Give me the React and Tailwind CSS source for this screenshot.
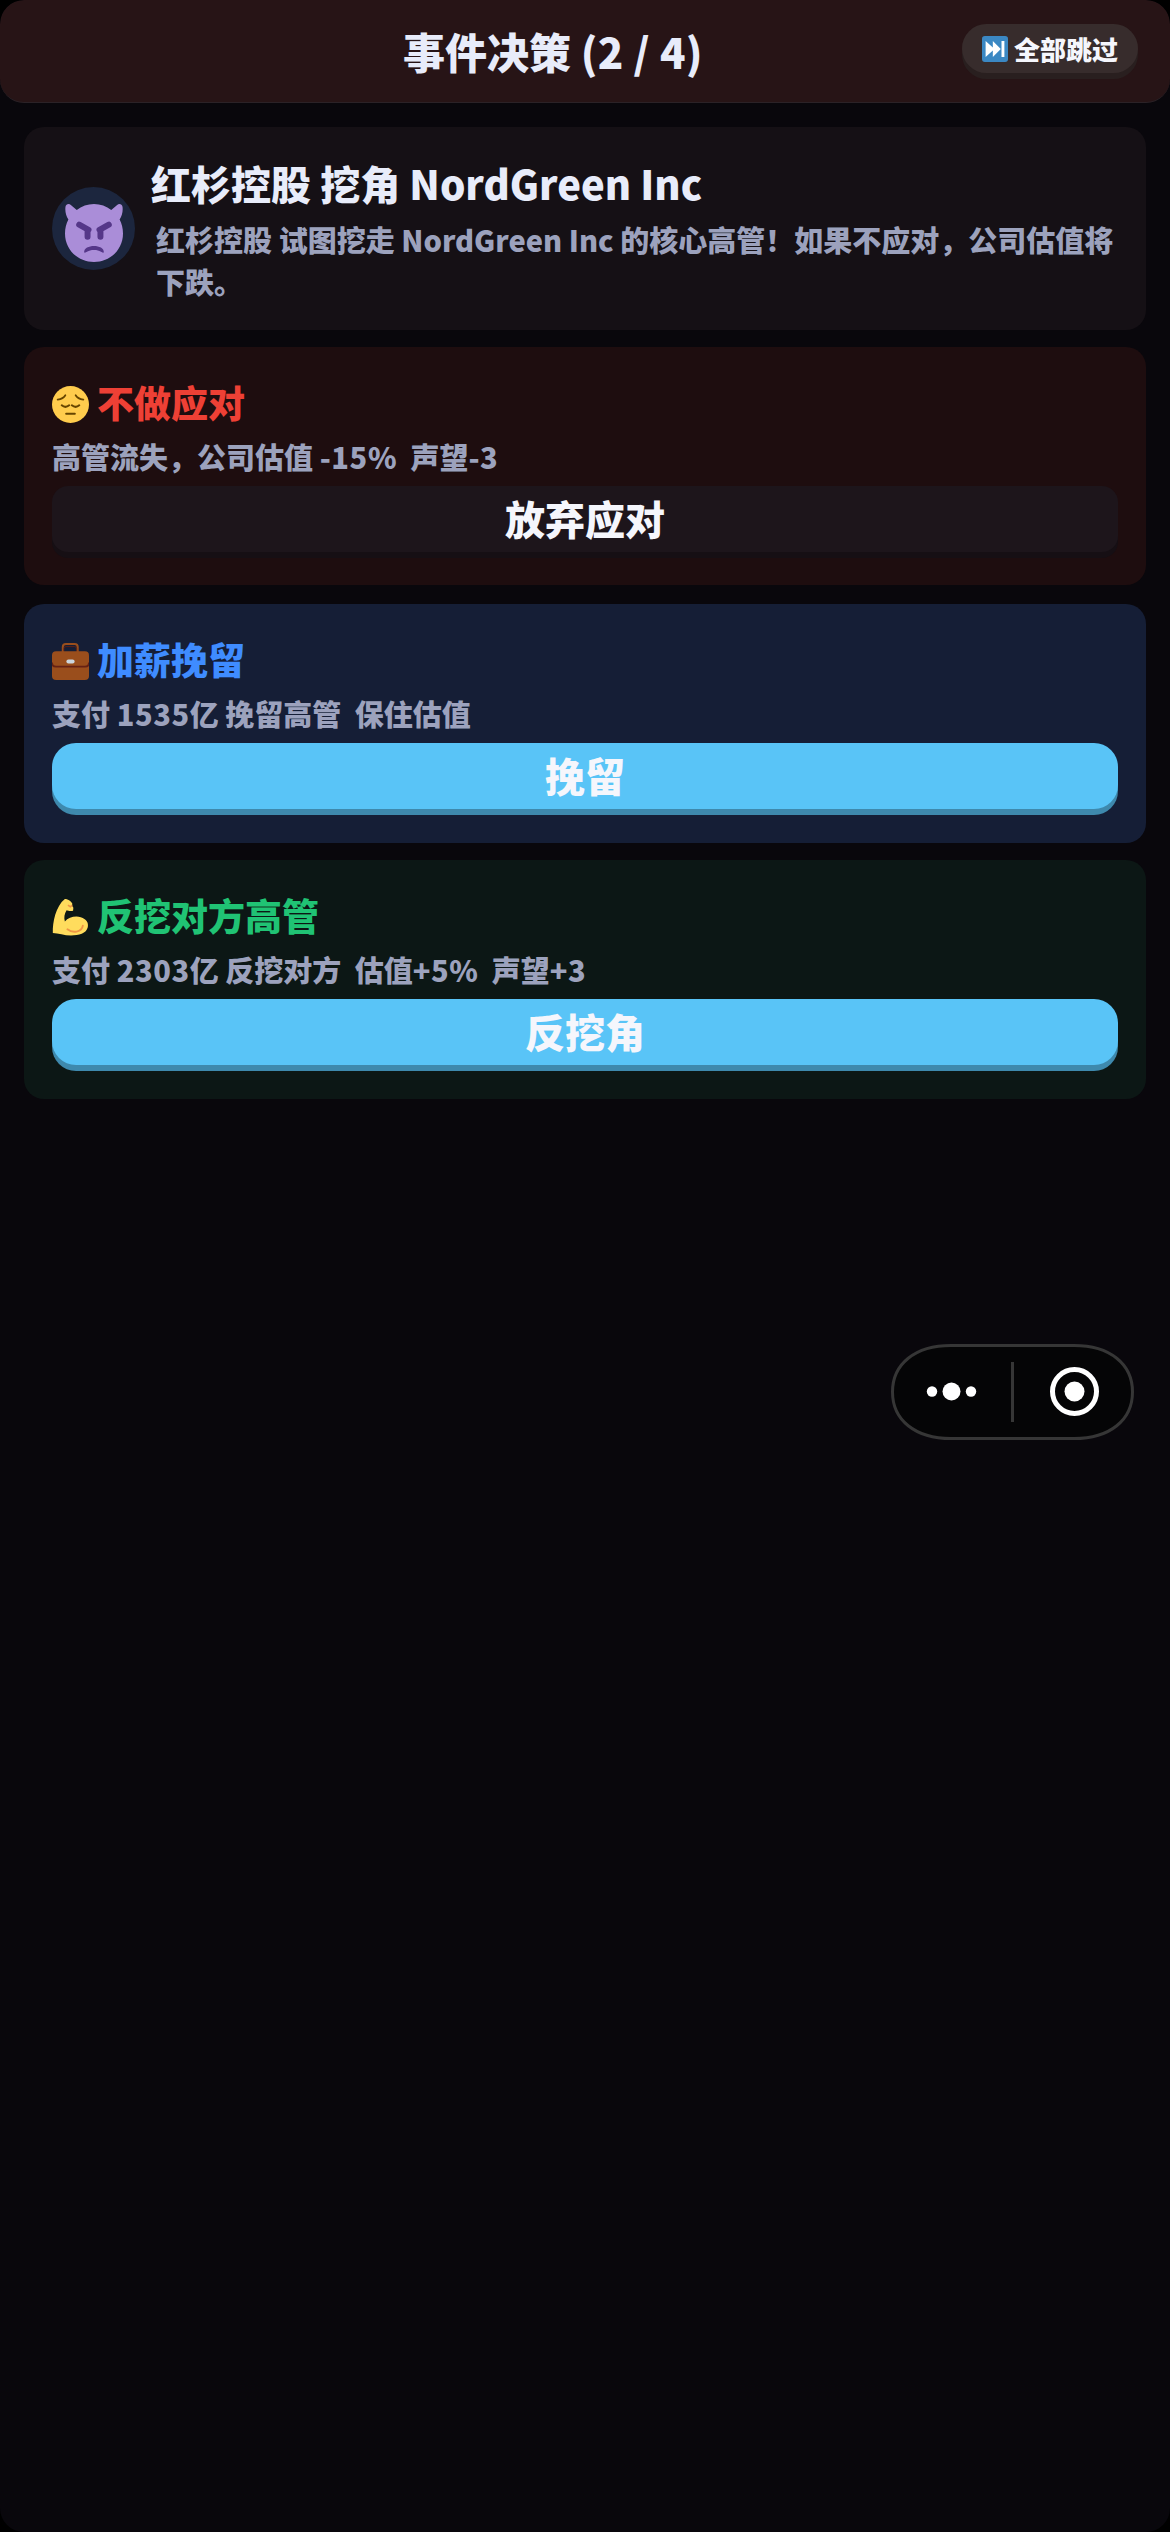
const events = [
  {
    id: "ignore",
    icon: PensiveIcon,
    title: "不做应对",
    desc: "高管流失，公司估值 -15%  声望-3",
    action: "放弃应对",
    card: "bg-[#1e0d0f] h-[238px]",
    color: "text-[#ee4035]",
    button: "bg-[#1d151b] rounded-[16px] shadow-[0_6px_0_#160f14]",
  },
  {
    id: "retain",
    icon: BriefcaseIcon,
    title: "加薪挽留",
    desc: "支付 1535亿 挽留高管  保住估值",
    action: "挽留",
    card: "bg-[#151e36] h-[239px] mt-[19px]",
    color: "text-[#3f8cff]",
    button: "bg-[#59c4f7] rounded-[24px] shadow-[0_6px_0_#3e89ad]",
  },
  {
    id: "counter",
    icon: MuscleIcon,
    title: "反挖对方高管",
    desc: "支付 2303亿 反挖对方  估值+5%  声望+3",
    action: "反挖角",
    card: "bg-[#0c1715] h-[239px] mt-[17px]",
    color: "text-[#20c374]",
    button: "bg-[#59c4f7] rounded-[24px] shadow-[0_6px_0_#3e89ad]",
  },
];

// ================= ICONS =================

function DevilIcon() {
  return (
    <svg viewBox="0 0 36 36" className="mt-[9px] w-[58px] h-[58px]">
      <path
        fill="#aa8dd8"
        d="M.3 1.700C.7-.2 2.600-.4 3.800.800L7.300 3.700C10.300 1.300 14 0 18 0S25.700 1.300 28.700 3.700L32.200.800C33.400-.4 35.300-.2 35.700 1.700 36.100 4.700 35.300 7.500 33.900 9.600 35.300 12.300 36 15.200 36 18.300 36 28.300 28 36 18 36S0 28.300 0 18.300C0 15.200.7 12.300 2.100 9.600.7 7.500-.1 4.700.3 1.700z"
      />
      <path
        d="M8.800 12.800L14.600 16M14 16.200V20.400M27.200 12.800L21.400 16M22 16.200V20.400"
        fill="none"
        stroke="#553788"
        strokeWidth="3.700"
        strokeLinecap="round"
      />
      <path fill="#553788" d="M11.900 30C11.500 24.700 24.500 24.700 24.100 30 23.500 31 22.500 28.500 18 28.500S12.500 31 11.900 30z" />
    </svg>
  );
}

function PensiveIcon() {
  return (
    <svg viewBox="0 0 36 36" className="w-[37px] h-[37px]">
      <circle cx="18" cy="18" r="18" fill="#ffcc4d" />
      <path
        d="M5.500 13.200Q11 12.500 13 9M30.500 13.200Q25 12.500 23 9"
        fill="none"
        stroke="#664500"
        strokeWidth="1.700"
        strokeLinecap="round"
      />
      <path
        d="M9.500 18.800Q13 21.800 16.700 18.800M19.300 18.800Q23 21.800 26.500 18.800M13.800 27H22.200"
        fill="none"
        stroke="#664500"
        strokeWidth="2"
        strokeLinecap="round"
      />
    </svg>
  );
}

function BriefcaseIcon() {
  return (
    <svg viewBox="0 0 36 36" className="w-[37px] h-[37px]">
      <path d="M10.500 9V4Q10.500 1 13.500 1H22Q25 1 25 4V9" fill="none" stroke="#9a4e1c" strokeWidth="2" />
      <path d="M11.500 8V5.500Q11.500 3.500 13.500 3.500H22Q24 3.500 24 5.500V8" fill="none" stroke="#662113" strokeWidth=".8" />
      <rect y="8" width="36" height="28" rx="4" fill="#9a4e1c" />
      <path d="M0 19Q0 23 4 23H32Q36 23 36 19" fill="none" stroke="#662113" strokeWidth="1.800" />
      <rect x="14" y="16" width="8" height="4" rx="2" fill="#ccd6dd" />
    </svg>
  );
}

function MuscleIcon() {
  return (
    <svg viewBox="0 0 36 36" className="w-[37px] h-[37px]">
      <path
        fill="#ffdc5d"
        d="M12.500 0C15 0 18.500 2 19.800 4.500L19.500 6.500 20.800 8.500 20.500 11.500C18 12 15.500 11.500 14.200 11 12 14.500 11.500 18 12.500 22 16 17.500 23 16.300 28 17.700 33.500 19.500 35.800 23 34.800 27.500 33.500 33.500 26 35.500 18.500 35.500 12 35.500 6 33 .8 33 .5 23 3.500 7 12.500 0z"
      />
      <path d="M15 29.500C20 33.500 29 32.500 30 26" fill="none" stroke="#ef9645" strokeWidth="1.800" strokeLinecap="round" />
      <path d="M15.500 6L17.800 7.500 19.800 6.200" fill="none" stroke="#ef9645" strokeWidth="1.500" />
    </svg>
  );
}

function SkipIcon() {
  return (
    <svg viewBox="0 0 36 36" className="w-[26px] h-[26px]">
      <rect width="36" height="36" rx="4" fill="#3b88c3" />
      <path fill="#fff" d="M5 7L15 16V7L26 18 15 29V20L5 29zM27 7H31V29H27z" />
    </svg>
  );
}

// ================= MINI PROGRAM CAPSULE =================

function Capsule() {
  return (
    <div className="fixed left-[891px] top-[1344px]">
      <svg viewBox="0 0 243 96" className="w-[243px] h-[96px]">
        <path
          d="M60 1.500H183C219 1.500 241.500 20 241.500 48S219 94.500 183 94.500H60C24 94.500 1.500 76 1.500 48S24 1.500 60 1.500z"
          fill="#050506"
          stroke="#363636"
          strokeWidth="3"
        />
        <rect x="120" y="18" width="3" height="60" fill="#363636" />
        <g fill="#fff">
          <circle cx="41" cy="47.500" r="5.200" />
          <circle cx="60.500" cy="47.500" r="9" />
          <circle cx="80" cy="47.500" r="5.200" />
          <circle cx="183.500" cy="47.500" r="10" />
        </g>
        <circle cx="183.500" cy="47.500" r="22" fill="none" stroke="#fff" strokeWidth="5" />
      </svg>
    </div>
  );
}

// amounts get slightly looser tracking than the words around them
function Amounts({ text }) {
  return text.split(/([-+\d%]+)/).map((part, i) =>
    i % 2 ? <span key={i} className="tracking-[0.6px]">{part}</span> : part
  );
}

function EventCard({ event }) {
  const Icon = event.icon;

  return (
    <section className={`${event.card} rounded-[20px] px-7 pt-[34px]`}>

      <h2 className={`${event.color} flex items-center gap-[8px] h-[46px] text-[37px] leading-[46px]`}>
        <Icon />
        <span className="pb-[4px]">{event.title}</span>
      </h2>

      <p className="mt-[8px] h-[42px] text-[29px] leading-[42px] text-[#9ca2bd] whitespace-pre">
        <Amounts text={event.desc} />
      </p>

      <button className={`${event.button} mt-[9px] flex h-[66px] w-full items-center justify-center pb-[3px] text-[40px] text-[#f5f6fc]`}>
        {event.action}
      </button>

    </section>
  );
}

function App() {
  return (
    <div className="min-h-screen bg-black">

      <div className="min-h-[2532px] w-[1170px] overflow-hidden rounded-[24px] bg-[#09070c] font-['Noto_Sans_CJK_SC',sans-serif] font-black">

        {/* ================= HEADER ================= */}

        <header className="flex h-[103px] items-start rounded-[24px] border-b border-[#2b2227] bg-[#271416] pl-[403px] pr-8">

          <h1 className="mt-[22px] text-[42px] leading-[58px] text-[#e8ecfa]">
            事件决策 <span className="tracking-[0.3px]">(2 / 4)</span>
          </h1>

          <button className="ml-auto mt-6 flex h-[49px] w-[176px] items-center gap-[6px] rounded-[25px] bg-[#372c2c] pl-5 text-[26px] text-[#f5f6fc] shadow-[0_6px_0_#291f1f]">
            <SkipIcon />
            <span className="pb-px">全部跳过</span>
          </button>

        </header>

        <main className="px-6 pt-6">

          {/* ================= EVENT SUMMARY ================= */}

          <section className="mb-[17px] flex h-[203px] items-center rounded-[20px] bg-[#151015] px-7">

            <div className="flex h-[83px] w-[83px] shrink-0 items-center justify-center rounded-full bg-[#1c263e]">
              <DevilIcon />
            </div>

            <div className="ml-4 flex-1">
              <h2 className="text-[40px] leading-[56px] text-[#e8ecfa]">
                红杉控股 挖角 NordGreen Inc
              </h2>
              <p className="ml-[5px] mt-[7px] text-[29px] leading-[42px] text-[#9ca2bd]">
                红杉控股 试图挖走 NordGreen Inc 的核心高管！如果不应对，公司估值将下跌。
              </p>
            </div>

          </section>

          {/* ================= OPTIONS ================= */}

          {events.map((event) => (
            <EventCard key={event.id} event={event} />
          ))}

        </main>

      </div>

      <Capsule />

    </div>
  );
}

export default App;
